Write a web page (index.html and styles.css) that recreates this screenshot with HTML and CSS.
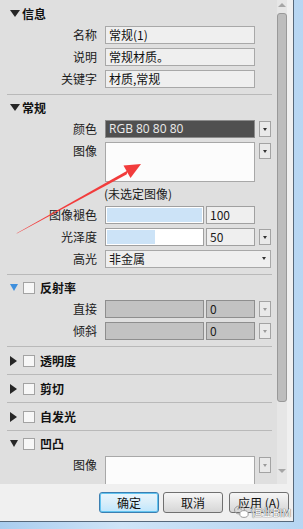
FILE: index.html
```html
<!DOCTYPE html>
<html lang="zh-CN">
<head>
  <meta charset="UTF-8" />
  <title>材质编辑器</title>
  <link rel="stylesheet" href="styles.css">
</head>
<body>
  <div class="dialog">
    <div class="main">
      <div class="panel">
        <div class="section first">
          <div class="sec-head"><span class="tri-down"></span><span class="sec-title">信息</span></div>
          <div class="row"><span class="label">名称</span><div class="field">常规(1)</div></div>
          <div class="row"><span class="label">说明</span><div class="field">常规材质。</div></div>
          <div class="row"><span class="label">关键字</span><div class="field">材质,常规</div></div>
        </div>

        <div class="section">
          <div class="sec-head"><span class="tri-down"></span><span class="sec-title">常规</span></div>
          <div class="row"><span class="label">颜色</span><div class="field dark">RGB 80 80 80</div><span class="drop"></span></div>
          <div class="row tall"><span class="label">图像</span><div class="field image"></div><span class="drop"></span></div>
          <div class="row note"><span class="label"></span><span class="hint">(未选定图像)</span></div>
          <div class="row"><span class="label">图像褪色</span><div class="slider"><div class="fill" style="width: 100%"></div></div><div class="num">100</div></div>
          <div class="row"><span class="label">光泽度</span><div class="slider"><div class="fill" style="width: 50%"></div></div><div class="num">50</div><span class="drop"></span></div>
          <div class="row"><span class="label">高光</span><div class="combo">非金属<span class="combo-arrow"></span></div></div>
        </div>

        <div class="section">
          <div class="sec-head"><span class="tri-down small blue"></span><span class="check"></span><span class="sec-title">反射率</span></div>
          <div class="row"><span class="label">直接</span><div class="slider off"></div><div class="num off">0</div><span class="drop off"></span></div>
          <div class="row"><span class="label">倾斜</span><div class="slider off"></div><div class="num off">0</div><span class="drop off"></span></div>
        </div>

        <div class="section closed">
          <div class="sec-head"><span class="tri-right"></span><span class="check"></span><span class="sec-title">透明度</span></div>
        </div>
        <div class="section closed">
          <div class="sec-head"><span class="tri-right"></span><span class="check"></span><span class="sec-title">剪切</span></div>
        </div>
        <div class="section closed">
          <div class="sec-head"><span class="tri-right"></span><span class="check"></span><span class="sec-title">自发光</span></div>
        </div>

        <div class="section last">
          <div class="sec-head"><span class="tri-down small"></span><span class="check"></span><span class="sec-title">凹凸</span></div>
          <div class="row tall"><span class="label">图像</span><div class="field image"></div><span class="drop off"></span></div>
        </div>
      </div>

      <div class="scrollbar">
        <span class="sb-up"></span>
        <div class="sb-thumb"></div>
        <span class="sb-down"></span>
      </div>
    </div>

    <div class="footer">
      <button class="btn default">确定</button>
      <button class="btn">取消</button>
      <button class="btn apply">应用 (A)</button>
    </div>

    <div class="watermark">
      <svg width="15" height="14" viewBox="0 0 15 14">
        <ellipse cx="5.5" cy="5" rx="5" ry="4" fill="none" stroke="#9a9a9a" stroke-width="1"/>
        <ellipse cx="10" cy="9" rx="4.2" ry="3.4" fill="#fff" stroke="#9a9a9a" stroke-width="1"/>
        <circle cx="4" cy="4" r="0.8" fill="#9a9a9a"/>
        <circle cx="7" cy="4" r="0.8" fill="#9a9a9a"/>
      </svg>
      <span class="wm-text">恒业BIM</span>
    </div>
  </div>

  <svg class="arrow" width="303" height="529" viewBox="0 0 303 529">
    <polygon points="16,234 18,232.5 128.5,170 126.5,174.5" fill="#f23c3c"/>
    <polygon points="141,164 123.5,165.5 130.5,178" fill="#f23c3c"/>
  </svg>
</body>
</html>
```

FILE: styles.css
```css
body {
  margin: 0;
  width: 303px;
  height: 529px;
  overflow: hidden;
  font-family: "Noto Sans CJK SC", "Liberation Sans", sans-serif;
  font-size: 12px;
  color: #1a1a1a;
  background: linear-gradient(90deg, #a9cdef, #cfe4f7 40%, #b7d6f2);
  position: relative;
}
.dialog {
  position: relative;
  width: 293px;
  height: 521px;
  background: #f0f0f0;
  border-right: 1px solid #56687a;
  border-bottom: 1px solid #56687a;
  display: flex;
  flex-direction: column;
}
.main {
  display: flex;
  height: 484px;
}
.panel {
  width: 277px;
  height: 484px;
  overflow: hidden;
  background: #dfdfdf;
}

/* sections */
.section {
  margin: 0 5px 0 7px;
  border-bottom: 1px solid #b9b9b9;
  padding-bottom: 6px;
  display: flex;
  flex-direction: column;
  gap: 4px;
}
.section.first { padding-top: 1px; }
.section.closed { padding-bottom: 0; }
.section.closed .sec-head { height: 27px; }
.section.last { border-bottom: none; }
.sec-head {
  height: 25px;
  margin-bottom: -4px;
  display: flex;
  align-items: center;
}
.section.closed .sec-head { margin-bottom: 0; }
.sec-title {
  font-weight: bold;
  font-size: 12px;
  line-height: 16px;
  margin-left: 2px;
  color: #111;
}
.check + .sec-title { margin-left: 5px; }
.tri-down {
  width: 0;
  height: 0;
  margin-left: 3px;
  border-left: 5px solid transparent;
  border-right: 5px solid transparent;
  border-top: 7px solid #262626;
}
.tri-down.small {
  border-left-width: 4px;
  border-right-width: 4px;
  border-top-width: 7px;
}
.tri-down.blue { border-top-color: #3e8fdd; }
.tri-right {
  width: 0;
  height: 0;
  margin-left: 3px;
  border-top: 5px solid transparent;
  border-bottom: 5px solid transparent;
  border-left: 7px solid #262626;
}
.check {
  width: 10px;
  height: 10px;
  margin-left: 6px;
  background: #f7f7f7;
  border: 1px solid #a3a3a3;
}
.tri-down.small + .check { margin-left: 5px; }

/* rows */
.row {
  display: flex;
  align-items: flex-start;
  height: 18px;
}
.row.tall { height: 40px; }
.row.note { height: 16px; }
.label {
  width: 90px;
  margin-right: 8px;
  text-align: right;
  line-height: 17px;
  flex-shrink: 0;
}
.field {
  box-sizing: border-box;
  width: 150px;
  height: 18px;
  padding-left: 3px;
  line-height: 16px;
  background: #efefef;
  border: 1px solid #a8a8a8;
  color: #111;
}
.field.dark {
  background: #505050;
  border-color: #8c8c8c;
  color: #ececec;
  font-family: "Open Sans", "Noto Sans CJK SC", sans-serif;
}
.field.image {
  height: 40px;
  background: #fcfcfc;
}
.hint {
  line-height: 16px;
  margin-left: -1px;
}
.drop {
  box-sizing: border-box;
  width: 12px;
  height: 16px;
  margin: 1px 0 0 4px;
  border: 1px solid #a3a3a3;
  background: #e9e9e9;
  position: relative;
}
.drop::after {
  content: "";
  position: absolute;
  left: 3px;
  top: 6px;
  border-left: 2px solid transparent;
  border-right: 2px solid transparent;
  border-top: 3px solid #333;
}
.drop.off::after { border-top-color: #9a9a9a; }
.slider {
  box-sizing: border-box;
  width: 99px;
  height: 18px;
  background: #fff;
  border: 1px solid #a0a0a0;
  padding: 1px;
}
.fill {
  height: 14px;
  background: #cce3f7;
}
.num {
  box-sizing: border-box;
  width: 49px;
  height: 18px;
  margin-left: 2px;
  padding-left: 3px;
  line-height: 16px;
  background: #efefef;
  border: 1px solid #a0a0a0;
}
.slider.off, .num.off {
  background: #c2c2c2;
  border-color: #8e8e8e;
}
.combo {
  box-sizing: border-box;
  width: 166px;
  height: 18px;
  padding-left: 3px;
  line-height: 16px;
  background: #efefef;
  border: 1px solid #a8a8a8;
  position: relative;
}
.combo-arrow {
  position: absolute;
  right: 4px;
  top: 6px;
  border-left: 2px solid transparent;
  border-right: 2px solid transparent;
  border-top: 3px solid #333;
}

/* scrollbar */
.scrollbar {
  width: 10px;
  height: 484px;
  background: #e6e6e6;
  position: relative;
}
.sb-up, .sb-down {
  position: absolute;
  left: 1px;
  border-left: 4px solid transparent;
  border-right: 4px solid transparent;
}
.sb-up { top: 3px; border-bottom: 4px solid #a6a6a6; }
.sb-down { top: 469px; border-top: 4px solid #a6a6a6; }
.sb-thumb {
  position: absolute;
  left: 0;
  top: 13px;
  box-sizing: border-box;
  width: 10px;
  height: 389px;
  background: #bdbdbd;
  border: 1px solid #999;
  border-radius: 3px;
}

/* footer */
.footer {
  flex: 1;
  display: flex;
  justify-content: flex-end;
  align-items: flex-start;
  padding: 8px 4px 0 0;
  gap: 4px;
}
.btn {
  box-sizing: border-box;
  width: 60px;
  height: 21px;
  padding: 0;
  font-family: "Noto Sans CJK SC", "Liberation Sans", sans-serif;
  font-size: 12px;
  line-height: 18px;
  color: #111;
  background: linear-gradient(#f6f6f6, #e6e6e6 50%, #d6d6d6);
  border: 1px solid #707070;
  border-radius: 3px;
}
.btn.default {
  border-color: #3c7fb1;
  box-shadow: inset 0 0 0 1px #62c4f0;
  background: linear-gradient(#eaf6fd, #d9eefa 50%, #bee6fd);
}
.btn.apply { margin-left: 2px; }

/* overlays */
.watermark {
  position: absolute;
  left: 234px;
  top: 505px;
  display: flex;
  align-items: center;
  gap: 2px;
  white-space: nowrap;
}
.wm-text {
  color: #fff;
  font-size: 11px;
  line-height: 13px;
  letter-spacing: -0.3px;
  text-shadow: 0 0 1px #555, 0 0 1px #555;
}
.arrow {
  position: absolute;
  left: 0;
  top: 0;
  pointer-events: none;
}
```
